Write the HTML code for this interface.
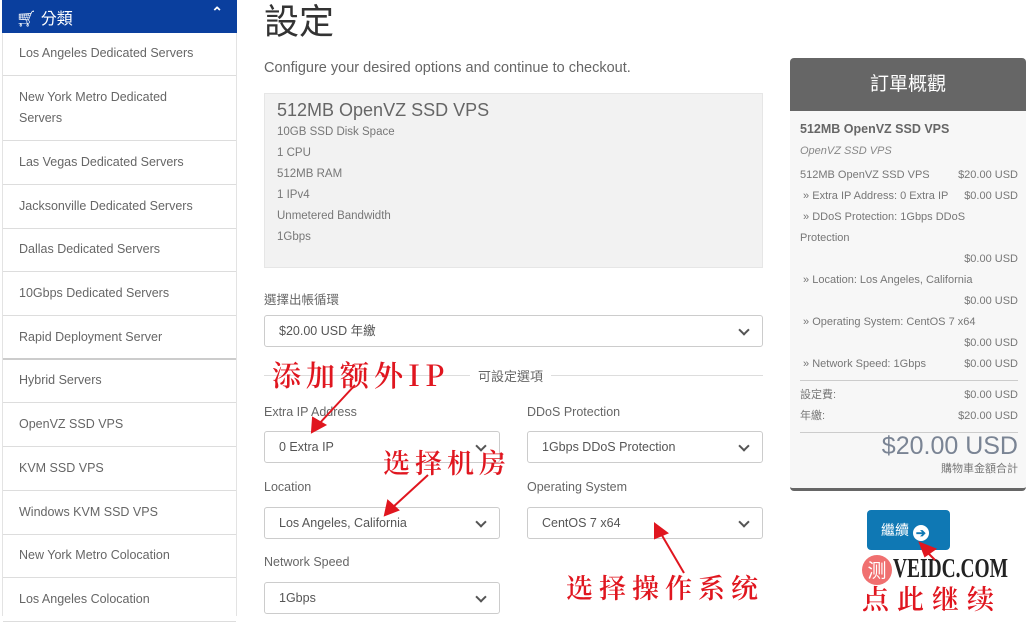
<!DOCTYPE html>
<html><head><meta charset="utf-8"><style>
*{margin:0;padding:0;box-sizing:border-box}
body{width:1030px;height:616px;overflow:hidden;background:#fff;font-family:"Liberation Sans","Noto Sans CJK TC",sans-serif;color:#666;position:relative}
.a{position:absolute;white-space:nowrap}
.side{position:absolute;left:2px;top:0;width:235px;height:616px;border-left:1px solid #e3e3e3;border-right:1px solid #e3e3e3}
.hd{position:absolute;left:2px;top:0;width:235px;height:33px;background:#0a3f9e;color:#fff;font-size:16px}
.it{position:absolute;left:3px;width:233px;border-bottom:1px solid #ddd;font-size:12.5px;color:#666;padding-left:16px;line-height:21px}
.sel{position:absolute;height:32px;border:1px solid #ccc;border-radius:3px;font-size:12.5px;color:#555;padding-left:14px;line-height:30px;background:#fff}
.sel:after{content:"";position:absolute;right:14px;top:10px;width:6px;height:6px;border-right:2px solid #555;border-bottom:2px solid #555;transform:rotate(45deg)}
.lb{position:absolute;font-size:12.5px;color:#666}
.red{position:absolute;color:#e0161f;font-family:"Noto Serif CJK SC",serif;font-weight:600;white-space:nowrap}
.sr{position:absolute;left:800px;width:218px;font-size:11px;color:#777;line-height:14px;height:14px}
.sr b{position:absolute;right:0;top:0;font-weight:normal}
</style></head><body>
<div class="side"></div>
<div class="hd"><span class="a" style="left:14px;top:5px">🛒︎ 分類</span><span class="a" style="right:14px;top:4px;font-size:14px;font-weight:bold">⌃</span></div>
<div class="it" style="top:34px;height:42px;padding-top:9px">Los Angeles Dedicated Servers</div>
<div class="it" style="top:76px;height:65px;padding-top:11px">New York Metro Dedicated<br>Servers</div>
<div class="it" style="top:141px;height:44px;padding-top:11px">Las Vegas Dedicated Servers</div>
<div class="it" style="top:185px;height:44px;padding-top:11px">Jacksonville Dedicated Servers</div>
<div class="it" style="top:229px;height:43px;padding-top:10px">Dallas Dedicated Servers</div>
<div class="it" style="top:272px;height:44px;padding-top:11px">10Gbps Dedicated Servers</div>
<div class="it" style="top:316px;height:44px;padding-top:11px;border-bottom:2px solid #ccc">Rapid Deployment Server</div>
<div class="it" style="top:360px;height:43px;padding-top:10px">Hybrid Servers</div>
<div class="it" style="top:403px;height:44px;padding-top:11px">OpenVZ SSD VPS</div>
<div class="it" style="top:447px;height:44px;padding-top:11px">KVM SSD VPS</div>
<div class="it" style="top:491px;height:44px;padding-top:11px">Windows KVM SSD VPS</div>
<div class="it" style="top:535px;height:43px;padding-top:10px">New York Metro Colocation</div>
<div class="it" style="top:578px;height:44px;padding-top:11px">Los Angeles Colocation</div>

<div class="a" style="left:264px;top:-6px;font-size:35px;color:#333">設定</div>
<div class="a" style="left:264px;top:60px;font-size:14.5px;color:#666">Configure your desired options and continue to checkout.</div>
<div class="a" style="left:264px;top:93px;width:499px;height:175px;background:#f2f2f2;border:1px solid #e6e6e6"></div>
<div class="a" style="left:277px;top:100px;font-size:18px;color:#666">512MB OpenVZ SSD VPS</div>
<div class="a" style="left:277px;top:122px;font-size:11.5px;color:#777;line-height:21px">10GB SSD Disk Space<br>1 CPU<br>512MB RAM<br>1 IPv4<br>Unmetered Bandwidth<br>1Gbps</div>
<div class="lb" style="left:264px;top:289px">選擇出帳循環</div>
<div class="sel" style="left:264px;top:315px;width:499px">$20.00 USD 年繳</div>
<div class="a" style="left:264px;top:375px;width:499px;border-top:1px solid #ddd"></div>
<div class="a" style="left:470px;top:366px;background:#fff;padding:0 8px;font-size:13px;color:#666">可設定選項</div>
<div class="lb" style="left:264px;top:405px">Extra IP Address</div>
<div class="lb" style="left:527px;top:405px">DDoS Protection</div>
<div class="sel" style="left:264px;top:431px;width:236px">0 Extra IP</div>
<div class="sel" style="left:527px;top:431px;width:236px">1Gbps DDoS Protection</div>
<div class="lb" style="left:264px;top:480px">Location</div>
<div class="lb" style="left:527px;top:480px">Operating System</div>
<div class="sel" style="left:264px;top:507px;width:236px">Los Angeles, California</div>
<div class="sel" style="left:527px;top:507px;width:236px">CentOS 7 x64</div>
<div class="lb" style="left:264px;top:555px">Network Speed</div>
<div class="sel" style="left:264px;top:582px;width:236px">1Gbps</div>

<div class="a" style="left:790px;top:58px;width:236px;height:433px;background:#f7f7f7;border-radius:4px;border-bottom:3px solid #666"></div>
<div class="a" style="left:790px;top:58px;width:236px;height:53px;background:#666;border-radius:4px 4px 0 0;color:#fff;font-size:19px;text-align:center;line-height:53px">訂單概觀</div>
<div class="sr" style="top:122px;font-size:12.5px;font-weight:bold;color:#666">512MB OpenVZ SSD VPS</div>
<div class="sr" style="top:144px;font-style:italic;color:#888">OpenVZ SSD VPS</div>
<div class="sr" style="top:168px">512MB OpenVZ SSD VPS<b>$20.00 USD</b></div>
<div class="sr" style="top:189px">&nbsp;» Extra IP Address: 0 Extra IP<b>$0.00 USD</b></div>
<div class="sr" style="top:210px">&nbsp;» DDoS Protection: 1Gbps DDoS</div>
<div class="sr" style="top:231px">Protection</div>
<div class="sr" style="top:252px"><b>$0.00 USD</b></div>
<div class="sr" style="top:273px">&nbsp;» Location: Los Angeles, California</div>
<div class="sr" style="top:294px"><b>$0.00 USD</b></div>
<div class="sr" style="top:315px">&nbsp;» Operating System: CentOS 7 x64</div>
<div class="sr" style="top:336px"><b>$0.00 USD</b></div>
<div class="sr" style="top:357px">&nbsp;» Network Speed: 1Gbps<b>$0.00 USD</b></div>
<div class="a" style="left:800px;top:380px;width:218px;border-top:1px solid #ccc"></div>
<div class="sr" style="top:388px">設定費:<b>$0.00 USD</b></div>
<div class="sr" style="top:409px">年繳:<b>$20.00 USD</b></div>
<div class="a" style="left:800px;top:432px;width:218px;border-top:1px solid #ccc"></div>
<div class="a" style="right:12px;top:432px;font-size:25px;color:#7a8494">$20.00 USD</div>
<div class="a" style="right:12px;top:460px;font-size:11px;color:#777">購物車金額合計</div>

<div class="a" style="left:867px;top:510px;width:83px;height:40px;background:#0f78b4;border-radius:4px;color:#fff;font-size:14px;line-height:40px;padding-left:14px">繼續 <span style="display:inline-block;width:16px;height:16px;border-radius:50%;background:#fff;color:#0f78b4;font-size:12px;line-height:16px;text-align:center;font-weight:bold;vertical-align:-2px">➔</span></div>
<div class="a" style="left:862px;top:555px;width:30px;height:30px;border-radius:50%;background:#f07070;color:#fff;font-size:19px;line-height:30px;text-align:center;font-family:'Noto Sans CJK SC',sans-serif">测</div>
<div class="a" style="left:893px;top:553px;font-family:'Liberation Serif',serif;font-weight:bold;font-size:27px;color:#222;transform:scaleX(0.72);transform-origin:left">VEIDC.COM</div>

<div class="red" style="left:272px;top:354px;font-size:29px;letter-spacing:5px">添加额外IP</div>
<div class="red" style="left:383px;top:442px;font-size:27px;letter-spacing:5px">选择机房</div>
<div class="red" style="left:566px;top:567px;font-size:27px;letter-spacing:6px">选择操作系统</div>
<div class="red" style="left:862px;top:578px;font-size:27px;letter-spacing:8px">点此继续</div>
<svg class="a" style="left:0;top:0" width="1030" height="616">
<g stroke="#e0161f" stroke-width="2" fill="#e0161f">
<line x1="355" y1="385" x2="318" y2="425"/><polygon points="312,432 313,418 325,425"/>
<line x1="428" y1="475" x2="392" y2="508"/><polygon points="385,515 388,501 398,510"/>
<line x1="684" y1="573" x2="660" y2="532"/><polygon points="655,524 667,533 655,538"/>
<line x1="935" y1="560" x2="925" y2="550"/><polygon points="920,543 935,549 925,556"/>
</g></svg>
</body></html>
